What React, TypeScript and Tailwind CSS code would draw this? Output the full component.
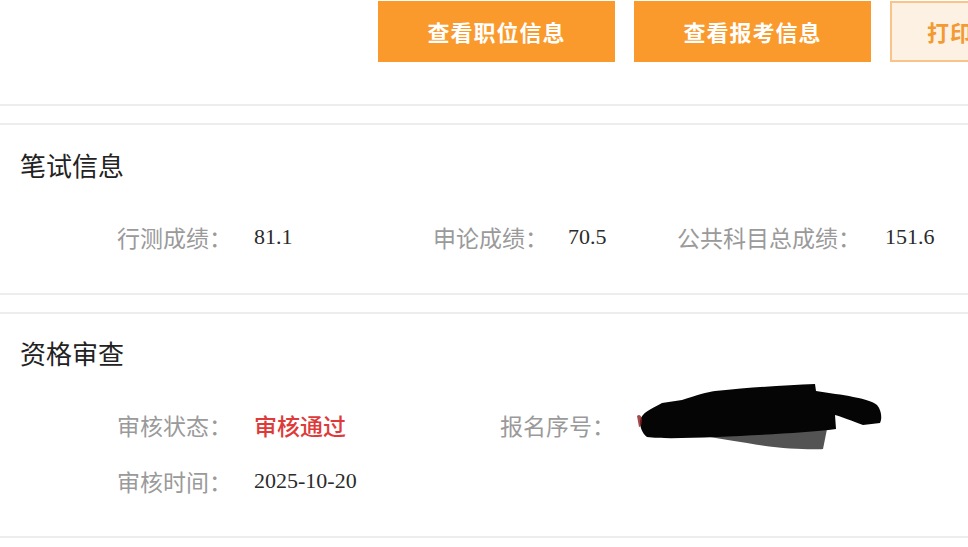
import React from 'react';

const cjk = { fontFamily: '"Noto Sans CJK SC", "Noto Sans", sans-serif' };
const serif = { fontFamily: '"Liberation Serif", "Noto Sans CJK SC", serif' };

function Label({ children }: { children: React.ReactNode }) {
  return <span className="text-[23px] leading-[36px] text-[#9a9a9a]">{children}</span>;
}

function Value({ children }: { children: React.ReactNode }) {
  return (
    <span className="text-[22px] leading-[36px] text-[#2b2b2b]" style={serif}>
      {children}
    </span>
  );
}

// redacted scribble over the registration number
function Scribble() {
  return (
    <svg width="246" height="68" viewBox="0 0 246 68" className="block">
      <path
        d="M12 40 C40 48 70 54 110 60 C140 66 175 67 186 66 L190 46 L120 44 Z"
        fill="#1a1a1a"
        opacity="0.75"
      />
      <path
        d="M3 38 C4 30 14 26 25 20 L45 17 C60 12 70 9 78 8 C120 4 150 2 178 1 L179 8 C205 12 232 15 240 22 C245 28 245 36 243 40 L226 42 C215 38 205 34 198 32 L199 46 C170 50 120 52 80 54 C50 55 25 56 10 54 C5 50 3 44 3 38 Z"
        fill="#050505"
      />
      <path d="M0 33 C2 31 4 32 5 36 C5 40 4 44 2 44 Z" fill="#8a1f1f" opacity="0.8" />
    </svg>
  );
}

export default function App() {
  return (
    <div className="w-[968px] h-[547px] overflow-hidden bg-white" style={cjk}>
      {/* top action bar */}
      <div className="h-[106px] border-b-2 border-[#ededed] pt-px">
        <div className="flex pl-[378px] gap-[19px]">
          <button className="w-[237px] h-[61px] shrink-0 bg-[#fa9a2d] text-white text-[22px] font-semibold tracking-[1px]">
            查看职位信息
          </button>
          <button className="w-[237px] h-[61px] shrink-0 bg-[#fa9a2d] text-white text-[22px] font-semibold tracking-[1px]">
            查看报考信息
          </button>
          <button className="w-[237px] h-[61px] shrink-0 bg-[#fdf1e3] border-2 border-[#f8c48a] text-[#f39a32] text-[22px] font-semibold text-left pl-[35px] tracking-[1px]">
            打印准考证
          </button>
        </div>
      </div>

      {/* 笔试信息 */}
      <div className="mt-[17px] border-y-2 border-[#ededed] pt-[22px] pb-[38px]">
        <div className="pl-[20px] text-[26px] leading-[36px] text-[#222]">笔试信息</div>
        <div className="mt-[36px] flex pl-[117px]">
          <div className="w-[316px] flex">
            <Label>行测成绩：</Label>
            <span className="ml-[22px]">
              <Value>81.1</Value>
            </span>
          </div>
          <div className="w-[244px] flex">
            <Label>申论成绩：</Label>
            <span className="ml-[20px]">
              <Value>70.5</Value>
            </span>
          </div>
          <div className="flex">
            <Label>公共科目总成绩：</Label>
            <span className="ml-[24px]">
              <Value>151.6</Value>
            </span>
          </div>
        </div>
      </div>

      {/* 资格审查 */}
      <div className="mt-[17px] border-y-2 border-[#ededed] pt-[21px] pb-[37px]">
        <div className="pl-[20px] text-[26px] leading-[36px] text-[#222]">资格审查</div>
        <div className="mt-[36px] flex pl-[117px] h-[36px]">
          <div className="w-[383px] flex">
            <Label>审核状态：</Label>
            <span className="ml-[22px] text-[23px] leading-[36px] text-[#de3a3a] font-medium">审核通过</span>
          </div>
          <div className="flex">
            <Label>报名序号：</Label>
            <div className="ml-[22px] -mt-[24px]">
              <Scribble />
            </div>
          </div>
        </div>
        <div className="mt-[20px] flex pl-[117px]">
          <Label>审核时间：</Label>
          <span className="ml-[22px]">
            <Value>2025-10-20</Value>
          </span>
        </div>
      </div>
    </div>
  );
}
